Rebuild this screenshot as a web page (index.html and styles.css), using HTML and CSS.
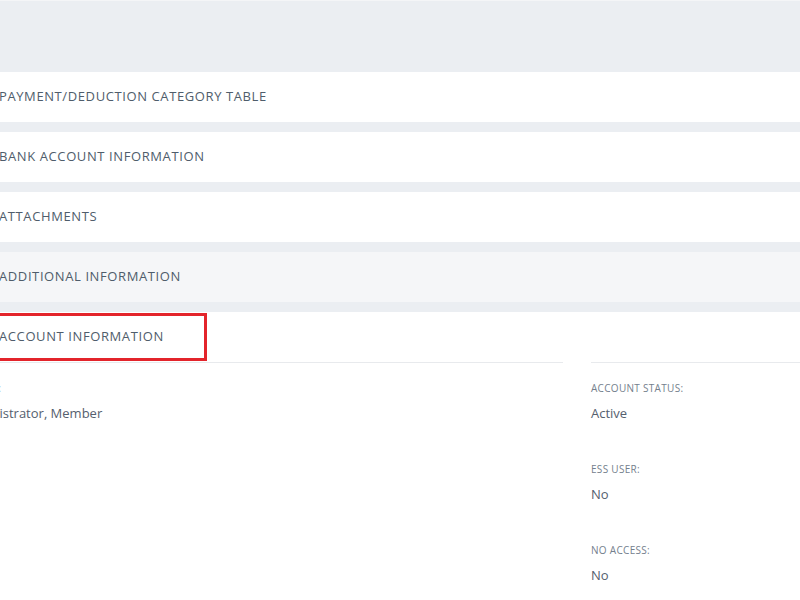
FILE: index.html
```html
<!DOCTYPE html>
<html>
<head>
<meta charset="utf-8">
<link rel="stylesheet" href="styles.css">
</head>
<body>
<div class="page">
  <div class="topband"></div>
  <div class="section"><span class="title">PAYMENT/DEDUCTION CATEGORY TABLE</span></div>
  <div class="section"><span class="title">BANK ACCOUNT INFORMATION</span></div>
  <div class="section"><span class="title">ATTACHMENTS</span></div>
  <div class="section hover"><span class="title">ADDITIONAL INFORMATION</span></div>
  <div class="section open">
    <div class="section-head">
      <span class="title">ACCOUNT INFORMATION</span>
      <div class="highlight"></div>
    </div>
    <div class="cols">
      <div class="col col-left">
        <div class="field">
          <div class="label">ROLE(S):</div>
          <div class="value">Administrator, Member</div>
        </div>
      </div>
      <div class="col col-right">
        <div class="field">
          <div class="label">ACCOUNT STATUS:</div>
          <div class="value">Active</div>
        </div>
        <div class="field">
          <div class="label">ESS USER:</div>
          <div class="value">No</div>
        </div>
        <div class="field">
          <div class="label">NO ACCESS:</div>
          <div class="value">No</div>
        </div>
      </div>
    </div>
  </div>
</div>
</body>
</html>
```
FILE: styles.css
```css
html, body {
  margin: 0;
  padding: 0;
  background: #ebeef2;
  font-family: "Open Sans", "Liberation Sans", sans-serif;
  overflow: hidden;
}
.page {
  margin-left: -34px;
  width: 900px;
}
.topband {
  height: 72px;
  background: #ebeef2;
  border-top: 1px solid #f4f5f7;
  box-sizing: border-box;
}
.section {
  background: #ffffff;
  margin-bottom: 10px;
}
.section > .title,
.section-head {
  display: flex;
  align-items: center;
  height: 50px;
  padding-left: 33px;
  padding-bottom: 2px;
  box-sizing: border-box;
}
.section.hover { background: #f5f6f8; }
.section.open { margin-bottom: 0; }
.section-head { position: relative; }
.title {
  font-size: 13px;
  color: #4f5d6b;
  letter-spacing: 0.6px;
}
.highlight {
  position: absolute;
  left: 0;
  top: 1px;
  bottom: 1px;
  width: 241px;
  border: 3px solid #e3242b;
  box-sizing: border-box;
}
.cols {
  display: flex;
  gap: 28px;
  height: 300px;
}
.col {
  border-top: 1px solid #e8eaed;
  padding-top: 18px;
}
.col-left { width: 597px; padding-left: 0; box-sizing: border-box; }
.col-left .field { margin-left: -6px; }
.col-right { flex: 1; }
.field { margin-bottom: 40px; }
.label {
  font-size: 10px;
  line-height: 14px;
  color: #74808d;
  margin-bottom: 9px;
  letter-spacing: 0.3px;
}
.value {
  font-size: 13px;
  line-height: 18px;
  color: #55606e;
}
```
